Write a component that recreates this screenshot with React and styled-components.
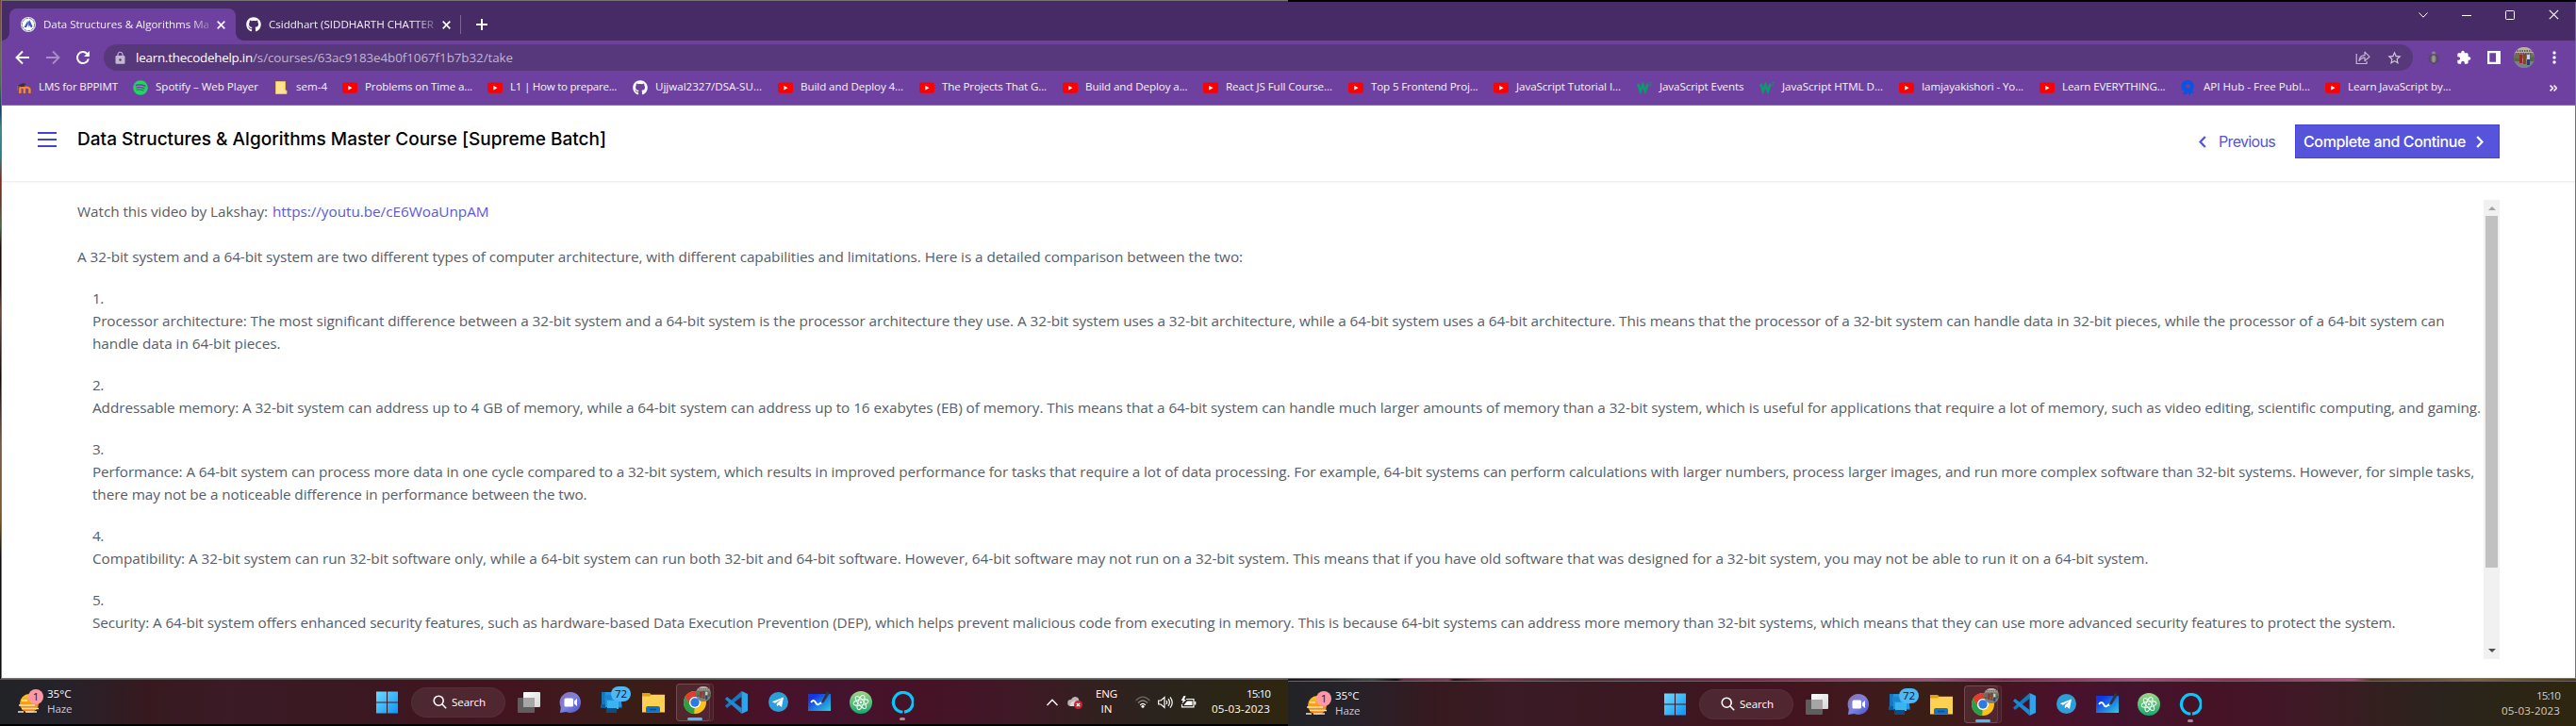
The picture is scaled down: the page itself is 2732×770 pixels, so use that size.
import React, { useLayoutEffect, useRef, useState } from "react";
import styled, { createGlobalStyle, css } from "styled-components";
import { FaGithub, FaSpotify } from "react-icons/fa";
import { MdExtension, MdLock, MdOutlineStarBorder } from "react-icons/md";

const Global = createGlobalStyle`
  * { box-sizing: border-box; }
  html, body { margin: 0; padding: 0; }
  body {
    width: 2732px;
    height: 770px;
    overflow: hidden;
    background: #000;
    font-family: "Open Sans", "Noto Sans", sans-serif;
  }
  svg { display: block; flex: none; }
`;

/* ---------- text set to a given measure ---------- */

const Measure = styled.span`
  display: block;
  flex: none;
  white-space: pre;
  width: ${(p) => p.$w}px;
`;

const Inner = styled.span`
  display: inline-block;
`;

function Fit({ w, children, ...rest }) {
  const ref = useRef(null);
  const [spacing, setSpacing] = useState(0);
  useLayoutEffect(() => {
    const natural = ref.current.getBoundingClientRect().width;
    setSpacing((w - natural) / Math.max(1, children.length));
  }, []);
  return (
    <Measure $w={w} {...rest}>
      <Inner ref={ref} style={{ letterSpacing: spacing }}>
        {children}
      </Inner>
    </Measure>
  );
}

/* ---------- desktop and window ---------- */

const Desktop = styled.div`
  position: relative;
  width: 2732px;
  height: 770px;
  display: flex;
  flex-direction: column;
  overflow: hidden;
  background: linear-gradient(#7a4a3c 0, #66704a 60px, #4b6b4a 90px, #123a66 118px, #3f8a86 136px, #2a7f8c 165px, #7c2c22 190px, #5b3a2c 215px, #4c6b4a 240px, #1b0808 262px, #1b0808 300px, #6a4a40 330px, #120606 400px, #7a5c50 470px, #7a5a28 550px, #0c0c10 590px, #0c0c10 770px);
`;

const SecondScreenEdge = styled.div`
  position: absolute;
  top: 0;
  right: 0;
  width: 1366px;
  height: 2px;
  background: #000;
`;

const Window = styled.div`
  margin-left: 1px;
  height: 720px;
  border: 1px solid #757575;
  display: flex;
  flex-direction: column;
  background: #fff;
`;

const TabStrip = styled.div`
  height: 42px;
  flex: none;
  padding: 8px 0 0 8px;
  background: #472b66;
  display: flex;
  align-items: flex-start;
`;

const Tab = styled.div`
  position: relative;
  height: 34px;
  width: ${(p) => p.$w}px;
  display: flex;
  align-items: center;
  padding-left: ${(p) => p.$pad}px;
  font-size: 11.6px;
  color: #f3eef8;
  ${(p) =>
    p.$active &&
    css`
      background: #6e41a0;
      border-radius: 8px 8px 0 0;
      &::before,
      &::after {
        content: "";
        position: absolute;
        bottom: 0;
        width: 8px;
        height: 8px;
      }
      &::before {
        left: -8px;
        background: radial-gradient(circle at 0 0, transparent 7.5px, #6e41a0 8px);
      }
      &::after {
        right: -8px;
        background: radial-gradient(circle at 100% 0, transparent 7.5px, #6e41a0 8px);
      }
    `}
`;

const TabTitle = styled.div`
  margin: 0 8px;
  width: 176px;
  overflow: hidden;
  line-height: 18px;
  padding-bottom: 1px;
  mask-image: linear-gradient(90deg, #000 155px, rgba(0, 0, 0, 0.25) 176px);
`;

const TabDivider = styled.div`
  width: 1px;
  height: 20px;
  margin: 7px 16px 0 0;
  background: #7d6695;
`;

const NewTab = styled.div`
  height: 34px;
  display: flex;
  align-items: center;
`;

const WindowButtons = styled.div`
  margin: 1px 17px 0 auto;
  display: flex;
  align-items: center;
  gap: 36px;
`;

const Toolbar = styled.div`
  flex: none;
  height: 69px;
  padding-top: 4px;
  background: #6e41a0;
  border-bottom: 1px solid #8e6ab4;
`;

const NavRow = styled.div`
  height: 28px;
  display: flex;
  align-items: center;
  padding-left: 14px;
`;

const NavIcons = styled.div`
  width: 94px;
  display: flex;
  gap: 16px;
`;

const UrlBar = styled.div`
  width: 2449px;
  height: 28px;
  border-radius: 14px;
  background: #57387b;
  display: flex;
  align-items: center;
  padding: 0 11px 0 10px;
  color: #c1b5ce;
  font-size: 13.4px;
`;

const UrlText = styled.div`
  display: flex;
  margin-left: 9px;
  line-height: 20px;
`;

const UrlHost = styled(Fit)`
  color: #fff;
`;

const UrlIcons = styled.div`
  margin-left: auto;
  display: flex;
  align-items: center;
  gap: 17px;
`;

const Extensions = styled.div`
  margin-left: 14px;
  display: flex;
  align-items: center;
`;

const Bookmarks = styled.div`
  height: 36px;
  display: flex;
  align-items: center;
  padding-left: 15px;
  font-size: 11.6px;
  line-height: 18px;
  color: #f6f2fa;
`;

const Bookmark = styled.div`
  flex: none;
  display: flex;
  align-items: center;
  gap: 8px;
  width: ${(p) => p.$advance}px;
`;

const BookmarkLabel = styled(Fit)`
  padding-bottom: 2px;
`;

/* ---------- course page ---------- */

const CourseHeader = styled.div`
  flex: none;
  height: 81px;
  display: flex;
  align-items: flex-start;
  padding: 20px 80px 0 38px;
  border-bottom: 1px solid #efefef;
  box-shadow: 0 1px 2px rgba(0, 0, 0, 0.04);
  font-family: Inter, "Liberation Sans", sans-serif;
`;

const MenuButton = styled.div`
  width: 20px;
  height: 16px;
  margin: 8px 22px 0 0;
  border-top: 2px solid #4441d6;
  border-bottom: 2px solid #4441d6;
  display: flex;
  align-items: center;
  &::after {
    content: "";
    width: 20px;
    height: 2px;
    background: #4441d6;
  }
`;

const CourseTitle = styled(Fit)`
  margin-top: 4px;
  font-size: 19px;
  font-weight: 550;
  line-height: 24px;
  color: #000;
`;

const HeaderActions = styled.div`
  margin-left: auto;
  display: flex;
  height: 36px;
`;

const PreviousLink = styled.div`
  display: flex;
  align-items: center;
  gap: 13px;
  margin-right: 21px;
  font-size: 16px;
  color: #5553da;
`;

const CompleteButton = styled.div`
  width: 217px;
  height: 36px;
  display: flex;
  align-items: center;
  padding-left: 8px;
  gap: 11px;
  background: #5654da;
  border: 1px solid #4643d0;
  color: #fff;
  font-size: 16px;
  font-weight: 550;
`;

const Lecture = styled.div`
  display: flex;
  height: 506px;
  padding: 19px 80px 0 80px;
  font-size: 15.3px;
  line-height: 24px;
  color: #565d68;
`;

const LectureText = styled.div`
  width: 2552px;
`;

const Intro = styled.div`
  display: flex;
  gap: 5px;
  margin-bottom: 24px;
`;

const Link = styled(Fit)`
  color: #5a58d8;
`;

const PointList = styled.div`
  padding: 20px 0 0 16px;
  display: flex;
  flex-direction: column;
  gap: 20px;
`;

const Scrollbar = styled.div`
  width: 17px;
  height: 487px;
  background: #f1f1f1;
  display: flex;
  flex-direction: column;
  align-items: center;
  padding: 7px 0;
`;

const Arrow = styled.div`
  width: 0;
  height: 0;
  border: 4px solid transparent;
  ${(p) =>
    p.$down
      ? css`border-top-color: #505050; border-bottom-width: 0; margin-top: auto;`
      : css`border-bottom-color: #a3a3a3; border-top-width: 0;`}
`;

const Thumb = styled.div`
  width: 13px;
  height: 373px;
  margin-top: 6px;
  background: #c1c1c1;
`;

/* ---------- taskbar ---------- */

const Taskbars = styled.div`
  display: flex;
  height: 50px;
`;

const Screen = styled.div`
  width: 1366px;
  height: 50px;
  display: flex;
  flex-direction: column;
  background: #000;
`;

const WallpaperSliver = styled.div`
  height: 2px;
  background: linear-gradient(90deg, #14161c 0, #20242a 40px, #3c4244 90px, #101214 115px, #6a2a48 122px, #7c3458 170px, #2a1018 176px, #8a2c4c 215px, #48303c 300px, #8a2050 500px, #b04a7c 680px, #8c1c50 760px, #bb4484 900px, #9c2858 1000px, #b84a80 1130px, #5c3820 1150px, #7a6434 1260px, #4a3c1c 1366px);
`;

const Taskbar = styled.div`
  height: 48px;
  border-top: 1px solid ${(p) => (p.$second ? "#6a6060" : "#5e5757")};
  display: flex;
  align-items: center;
  color: #fff;
  font-size: 11.6px;
  background: linear-gradient(90deg, #222326 0, #25222a 60px, #37191f 160px, #3a1b26 240px, #3b1721 400px, #43141f 530px, #3e1a1c 620px, #3a1e15 675px, #43151f 740px, #4a112a 820px, #43132e 880px, #471226 980px, #3f1926 1080px, #33201f 1160px, #2a241d 1230px, #2b2517 1290px, #2f260f 1366px);
`;

const Weather = styled.div`
  flex: none;
  display: flex;
  width: 399px;
  padding-left: 19px;
  gap: 4px;
  align-items: center;
  height: 47px;
`;

const Stack = styled.div`
  display: flex;
  flex-direction: column;
  align-items: ${(p) => p.$align || "flex-start"};
  line-height: 16px;
  padding-bottom: 2px;
  color: ${(p) => p.$color || "#fff"};
`;

const Muted = styled(Fit)`
  color: #cfc8cb;
`;

const SearchPill = styled.div`
  width: 100px;
  height: 32px;
  margin: 0 13px;
  padding-left: 22px;
  border-radius: 16px;
  background: rgba(255, 255, 255, 0.08);
  border: 1px solid rgba(255, 255, 255, 0.04);
  display: flex;
  align-items: center;
  gap: 5px;
`;

const Apps = styled.div`
  display: flex;
  align-items: center;
  gap: 20px;
  height: 47px;
`;

const AppSlot = styled.div`
  position: relative;
  width: 24px;
  height: 24px;
  display: flex;
  align-items: center;
  justify-content: center;
`;

const ActivePlate = styled.div`
  position: absolute;
  left: -8px;
  top: -8px;
  width: ${(p) => p.$w}px;
  height: 40px;
  border-radius: 4px;
  border: 1px solid rgba(255, 255, 255, 0.09);
  background: rgba(255, 255, 255, 0.04);
`;

const AppIcon = styled.div`
  position: relative;
`;

const Indicator = styled.div`
  position: absolute;
  top: 28px;
  left: ${(p) => 12 - p.$w / 2}px;
  width: ${(p) => p.$w}px;
  height: 3px;
  border-radius: 2px;
  background: ${(p) => p.$color};
`;

const CountBadge = styled.div`
  position: absolute;
  left: 11px;
  top: -5px;
  width: 21px;
  height: 16px;
  border-radius: 8px;
  background: #4cb8f8;
  color: #0c1620;
  font-size: 11.5px;
  line-height: 16px;
  text-align: center;
`;

const AvatarBadge = styled.div`
  position: absolute;
  left: 13px;
  top: -5px;
`;

const Tray = styled.div`
  display: flex;
  align-items: center;
  margin-left: auto;
`;

const Gap = styled.div`
  width: ${(p) => p.$w}px;
`;

/* ---------- drawings ---------- */

const CloseX = ({ s = 9, c = "#fff", w = 1.7 }) => (
  <svg width={s} height={s} viewBox="0 0 9 9" stroke={c} strokeWidth={w}>
    <path d="M.7 .7l7.6 7.6M8.3 .7L.7 8.3" />
  </svg>
);

const CourseIcon = () => (
  <svg width="16" height="16" viewBox="0 0 16 16">
    <circle cx="8" cy="8" r="8" fill="#dfe5ee" />
    <circle cx="8" cy="8" r="6.6" fill="#fff" stroke="#5d6670" strokeWidth=".8" strokeDasharray="3 1" />
    <path d="M3.5 11l2.8-5 1.2-2 .4 3.4L6 11zM8 5.5l1.3-2.2L12.6 10 11 11.5 9.5 9l-1 2z" fill="#3d57c4" />
  </svg>
);

const BackArrow = ({ color = "#fff", flip }) => (
  <svg width="16" height="16" viewBox="0 0 16 16" fill="none" stroke={color} strokeWidth="1.9">
    {flip ? <path d="M1 8h13M8 1.5L14.5 8 8 14.5" /> : <path d="M15 8H2M8 1.5L1.5 8 8 14.5" />}
  </svg>
);

const Reload = () => (
  <svg width="16" height="16" viewBox="0 0 16 16" fill="none" stroke="#fff" strokeWidth="2">
    <path d="M13.8 9.5A6 6 0 1 1 12.4 4" />
    <path d="M14.9 1v6H9z" fill="#fff" stroke="none" />
  </svg>
);

const Share = () => (
  <svg width="16" height="16" viewBox="0 0 16 16" fill="none" stroke="#c3b8cf" strokeWidth="1.2">
    <path d="M1.2 4v10.5H12V12" />
    <path d="M4 11.5c.3-4 2.5-5.700 6-5.800V2.200l5 5-5 4.300V8.200c-2.500 0-4.300.8-6 3.300z" strokeLinejoin="round" />
  </svg>
);

const Bug = () => (
  <svg width="16" height="16" viewBox="0 0 16 16">
    <path d="M2 5l3 2M14 5l-3 2M1 9h4M15 9h-4M2 13l3-2M14 13l-3-2" stroke="#564b5f" strokeWidth="1" />
    <ellipse cx="8" cy="9.5" rx="4" ry="5" fill="#6b6570" stroke="#4a4252" />
    <ellipse cx="8" cy="9.5" rx="1.8" ry="3.4" fill="#9a959c" />
    <ellipse cx="8" cy="3" rx="2.2" ry="1.6" fill="#8a858c" />
  </svg>
);

const SidePanel = () => (
  <svg width="14" height="14" viewBox="0 0 14 14">
    <path fill="#fff" fillRule="evenodd" d="M0 0h14v14H0zM2.3 2.3v9.4H9V2.3z" />
  </svg>
);

const Avatar = ({ s = 22 }) => (
  <svg width={s} height={s} viewBox="0 0 22 22">
    <defs>
      <clipPath id="face"><circle cx="11" cy="11" r="11" /></clipPath>
    </defs>
    <g clipPath="url(#face)">
      <rect width="22" height="22" fill="#8f8a83" />
      <rect width="22" height="6" fill="#b9b3a8" />
      <path d="M1 4h20M2 7h18" stroke="#4c463f" strokeWidth="1.5" strokeDasharray="1.5 1" />
      <path d="M0 8h22v4H0z" fill="#6c6b5c" />
      <path d="M0 12h6v3H0zM17 11h5v4h-5z" fill="#4d6b42" />
      <path d="M0 15h22v7H0z" fill="#78818a" />
      <path d="M6 8h3v9H6z" fill="#9a2a2a" />
      <path d="M10 7h3v11h-3z" fill="#7a4a2c" />
      <path d="M14 8h3v5h-3z" fill="#c8d4e4" />
      <path d="M14 13h3v6h-3z" fill="#28406c" />
    </g>
  </svg>
);

const Dots = () => (
  <svg width="4" height="14" viewBox="0 0 4 14" fill="#fff">
    <circle cx="2" cy="2" r="1.7" /><circle cx="2" cy="7" r="1.7" /><circle cx="2" cy="12" r="1.7" />
  </svg>
);

const YouTube = () => (
  <svg width="16" height="16" viewBox="0 0 16 16">
    <rect y="2.5" width="16" height="11.3" rx="2.4" fill="#f00" />
    <path d="M6.3 5.8l4.2 2.4-4.2 2.4z" fill="#fff" />
  </svg>
);

const Moodle = () => (
  <svg width="16" height="16" viewBox="0 0 16 16" fill="none">
    <path d="M4.300 14V9.5Q4.300 7.6 6.300 7.600T8.900 9.500V14M8.900 9.500Q8.900 7.600 11.200 7.600T14.400 9.500V14" stroke="#f28a2e" strokeWidth="2.4" />
    <path d="M2 5.500l5-2.200 3.500.5-2 3-3 .5z" fill="#3b3038" />
    <path d="M1.5 6v5" stroke="#8a6a78" strokeWidth=".8" />
  </svg>
);

const Note = () => (
  <svg width="16" height="16" viewBox="0 0 16 16">
    <path d="M2.500 1.500h10v9.500h1.500v3.500H2.500z" fill="#fde293" stroke="#e5c155" strokeWidth=".9" />
  </svg>
);

const W3 = () => (
  <svg width="16" height="16" viewBox="0 0 16 16" fill="none" stroke="#0a9b6c">
    <path d="M1.300 4l2.500 7.600L6.400 5 9 11.600 11.500 4" strokeWidth="2.700" />
    <path d="M13.3 2.3h1.8l-1 1.5q1.2.2.9 1.400-.6 1-1.800.4" strokeWidth=".7" />
  </svg>
);

const ApiHub = () => (
  <svg width="16" height="16" viewBox="0 0 16 16">
    <path d="M7.5 0a6.5 6.5 0 0 1 4.5 11l2.5 2.5H11L9.5 15.8H8V13L5 15.5 1.500 15l2-3A6.500 6.500 0 0 1 7.500 0z" fill="#0a55e0" />
    <circle cx="7.5" cy="6.5" r="2.3" fill="#6e41a0" />
    <path d="M6 9.5L5.500 13 8 11l2 1-1-3z" fill="#0a55e0" />
  </svg>
);

const Chevron = ({ right, color }) => (
  <svg width="8" height="13" viewBox="0 0 8 13" fill="none" stroke={color} strokeWidth="2.300">
    {right ? <path d="M1.200 1l5.300 5.500L1.200 12" /> : <path d="M6.800 1L1.500 6.500 6.800 12" />}
  </svg>
);

const Haze = () => (
  <svg width="27" height="28" viewBox="0 0 27 28">
    <defs>
      <linearGradient id="sun" x1="0" y1="0" x2="0" y2="1">
        <stop offset="0" stopColor="#ffc814" /><stop offset="1" stopColor="#ef7416" />
      </linearGradient>
    </defs>
    <circle cx="12" cy="15" r="10" fill="url(#sun)" />
    <path d="M4 12h6M1 17h17M4 20.5h18M0 24h6M8 24h12" stroke="#ffe9b8" strokeWidth="1.6" />
    <circle cx="19" cy="8" r="8" fill="#ff97a5" />
    <text x="19" y="12.2" fontSize="11.5" textAnchor="middle" fill="#241416" fontFamily="Open Sans">1</text>
  </svg>
);

const WindowsLogo = () => (
  <svg width="24" height="24" viewBox="0 0 24 24">
    <defs>
      <linearGradient id="win" x1="0" y1="0" x2="24" y2="24" gradientUnits="userSpaceOnUse">
        <stop offset="0" stopColor="#6fdcff" /><stop offset="1" stopColor="#0a90f4" />
      </linearGradient>
    </defs>
    <path d="M0 .5h11v11H0zM12 .5h11v11H12zM0 12.5h11v11H0zM12 12.5h11v11H12z" fill="url(#win)" />
  </svg>
);

const Magnifier = () => (
  <svg width="15" height="15" viewBox="0 0 15 15" fill="none" stroke="#fff" strokeWidth="1.6">
    <circle cx="6.2" cy="6.2" r="5" /><path d="M9.8 9.8l4.4 4.5" />
  </svg>
);

const TaskView = () => (
  <svg width="24" height="22" viewBox="0 0 24 22">
    <defs>
      <linearGradient id="tv" x1="0" y1="0" x2="1" y2="1"><stop offset="0" stopColor="#fff" /><stop offset="1" stopColor="#d5d5d5" /></linearGradient>
    </defs>
    <rect x="6" width="18" height="16" rx="1" fill="url(#tv)" />
    <rect y="6" width="18" height="16" rx="1" fill="#5f5d5e" />
    <rect x="6" y="6" width="12" height="10" fill="#a8a5a6" />
  </svg>
);

const Chat = () => (
  <svg width="24" height="24" viewBox="0 0 24 24">
    <defs>
      <linearGradient id="ch" x1="0" y1="0" x2="1" y2="1"><stop offset="0" stopColor="#8e6fae" /><stop offset=".5" stopColor="#7b82e0" /><stop offset="1" stopColor="#4a50c4" /></linearGradient>
    </defs>
    <path d="M12 1a11 11 0 1 1-4.500 21L1 23l.8-6A11 11 0 0 1 12 1z" fill="url(#ch)" />
    <rect x="5.5" y="7.5" width="9.5" height="9" rx="1.5" fill="#fff" />
    <path d="M16 10.500l3-2.500v8l-3-2.500z" fill="#fff" />
  </svg>
);

const PhoneLink = () => (
  <svg width="24" height="24" viewBox="0 0 24 24">
    <path d="M1 1h10v16H1z" fill="#1577c0" /><path d="M0 14h6v4H0zM18 14h5v4h-5z" fill="#0d5c9c" />
    <rect x="5" y="1" width="17" height="16" fill="#2296dc" /><rect x="7" y="10" width="12" height="9" fill="#39b4ee" />
    <path d="M6 18h11v5H6z" fill="#0b4c84" /><path d="M4 4h8v5H4z" fill="#1c86d0" />
  </svg>
);

const Folder = () => (
  <svg width="24" height="22" viewBox="0 0 24 22">
    <path d="M0 1h8l2 2v3H0z" fill="#e2a20c" />
    <path d="M0 4.5h8l2-1.800h14V21.500H0z" fill="#ffd153" />
    <path d="M4 21.500V17q0-2 2-2h11q2 0 2 2v4.500z" fill="#1272c4" />
    <path d="M8 18.500h7" stroke="#0b4e90" strokeWidth="1.5" />
  </svg>
);

const Chrome = () => (
  <svg width="24" height="24" viewBox="0 0 24 24">
    <circle cx="12" cy="12" r="12" fill="#fbc116" />
    <path d="M1.6 6A12 12 0 0 1 22.4 6H12a6 6 0 0 0-5.2 9z" fill="#e33b2e" />
    <path d="M1.6 6l5.2 9A6 6 0 0 0 12 18l-.5 6A12 12 0 0 1 1.6 6z" fill="#26a148" />
    <path d="M17.2 15L12 24h-.5L11.5 17z" fill="#fbc116" />
    <circle cx="12" cy="12" r="6" fill="#fff" /><circle cx="12" cy="12" r="4.7" fill="#2c7be5" />
  </svg>
);

const VSCode = () => (
  <svg width="24" height="24" viewBox="0 0 24 24">
    <path d="M17.5 0L0 15.5 2 18 17.5 6z" fill="#1279bf" />
    <path d="M17.5 24L0 8.5 2 6 17.5 18z" fill="#1b8ad3" />
    <path d="M17.5 0L24 3v18l-6.500 3z" fill="#2ba6ee" />
  </svg>
);

const Telegram = () => (
  <svg width="21" height="21" viewBox="0 0 21 21">
    <circle cx="10.5" cy="10.5" r="10.5" fill="#2a9fd9" />
    <path d="M3.800 10.300L16 5.500l-2 10.500-3.300-2.400-1.700 1.700-.3-3L14 7.500l-7 4.300z" fill="#fff" />
  </svg>
);

const Whiteboard = () => (
  <svg width="24" height="24" viewBox="0 0 24 24">
    <defs>
      <linearGradient id="wb" x1="0" y1="0" x2="1" y2="1"><stop offset="0.2" stopColor="#1136e8" /><stop offset="1" stopColor="#2cd0dc" /></linearGradient>
    </defs>
    <rect y="3" width="24" height="18" fill="url(#wb)" />
    <path d="M3 12q3-4 5 0t4.500 1l2.500-1" fill="none" stroke="#fff" strokeWidth="1.9" />
    <path d="M14 12L20 0l3 2-6.500 10-2.500 1z" fill="#33323c" />
  </svg>
);

const Atom = () => (
  <svg width="24" height="24" viewBox="0 0 24 24">
    <defs>
      <linearGradient id="at" x1="0" y1="0" x2="0" y2="1"><stop offset="0" stopColor="#9ed789" /><stop offset="1" stopColor="#18a76e" /></linearGradient>
    </defs>
    <circle cx="12" cy="12" r="12" fill="url(#at)" />
    <g fill="none" stroke="#e8f8ec" strokeWidth="1">
      <ellipse cx="12" cy="12" rx="3" ry="8" transform="rotate(20 12 12)" />
      <ellipse cx="12" cy="12" rx="3" ry="8" transform="rotate(80 12 12)" />
      <ellipse cx="12" cy="12" rx="3" ry="8" transform="rotate(140 12 12)" />
    </g>
    <circle cx="12" cy="12" r="1.2" fill="#fff" />
  </svg>
);

const Alexa = () => (
  <svg width="24" height="24" viewBox="0 0 24 24" fill="none" stroke="#06c8fb" strokeWidth="3.2">
    <path d="M10.5 22A10.4 10.4 0 1 1 14 22.2M10.8 23.5V20.5" />
  </svg>
);

const TrayUp = () => (
  <svg width="12" height="8" viewBox="0 0 12 8" fill="none" stroke="#fff" strokeWidth="1.4"><path d="M.5 7L6 1.3 11.500 7" /></svg>
);

const CloudError = () => (
  <svg width="16" height="14" viewBox="0 0 16 14">
    <path d="M3.5 11a3.5 3.5 0 0 1 .5-7A4.5 4.5 0 0 1 12 3l1 8z" fill="#b9b4b5" />
    <path d="M3 11q0-5 5-6l4 6z" fill="#dedada" />
    <circle cx="11.5" cy="9.5" r="4.5" fill="#d81f33" />
    <path d="M9.8 7.8l3.4 3.4M13.2 7.8l-3.4 3.4" stroke="#fff" strokeWidth="1.2" />
  </svg>
);

const Wifi = () => (
  <svg width="16" height="13" viewBox="0 0 16 13" fill="none" strokeWidth="1.3">
    <path d="M.6 5Q8-2.6 15.4 5" stroke="#6b6462" />
    <path d="M3 7.5q5-5 10 0" stroke="#8c8684" />
    <path d="M5.2 9.7q2.8-2.8 5.6 0" stroke="#fff" />
    <circle cx="8" cy="11.3" r="1.5" fill="#fff" />
  </svg>
);

const Volume = () => (
  <svg width="16" height="14" viewBox="0 0 16 14" fill="none" stroke="#fff" strokeWidth="1.2">
    <path d="M.7 5v4h2.500L7 12.500v-11L3.200 5z" /><path d="M9 5q1.300 2 0 4M11 3.200q2.800 3.800 0 7.600M13 1.300q4.500 5.700 0 11.400" />
  </svg>
);

const Battery = () => (
  <svg width="17" height="14" viewBox="0 0 17 14" fill="none" stroke="#fff" strokeWidth="1.2">
    <path d="M6 3.5h8v8.300H1.500V9" /><path d="M7 5.500h5.500V10H3.500z" fill="#fff" stroke="none" /><path d="M15.5 6v3.500" strokeWidth="1.6" />
    <path d="M3.5 0L.7 5h2L1.500 8.500 6 4H4L5.500 0z" fill="#fff" stroke="none" />
  </svg>
);

/* ---------- data ---------- */

const bookmarks = [
  [Moodle, "LMS for BPPIMT", 84, 124],
  [() => <FaSpotify size={16} color="#1ed760" />, "Spotify – Web Player", 109, 149],
  [Note, "sem-4", 33, 73],
  [YouTube, "Problems on Time a...", 114, 154],
  [YouTube, "L1 | How to prepare...", 113, 154],
  [() => <FaGithub size={16} color="#fff" />, "Ujjwal2327/DSA-SU...", 113, 154],
  [YouTube, "Build and Deploy 4...", 109, 150],
  [YouTube, "The Projects That G...", 111, 152],
  [YouTube, "Build and Deploy a...", 108.5, 149],
  [YouTube, "React JS Full Course...", 113, 154],
  [YouTube, "Top 5 Frontend Proj...", 113.5, 154],
  [YouTube, "JavaScript Tutorial I...", 111, 152],
  [W3, "JavaScript Events", 89.5, 130],
  [W3, "JavaScript HTML D...", 107, 148],
  [YouTube, "Iamjayakishori - Yo...", 108, 149],
  [YouTube, "Learn EVERYTHING...", 109.5, 150],
  [ApiHub, "API Hub - Free Publ...", 113, 153],
  [YouTube, "Learn JavaScript by...", 109.5, 150],
];

const points = [
  [
    ["Processor architecture: The most significant difference between a 32-bit system and a 64-bit system is the processor architecture they use. A 32-bit system uses a 32-bit architecture, while a 64-bit system uses a 64-bit architecture. This means that the processor of a 32-bit system can handle data in 32-bit pieces, while the processor of a 64-bit system can", 2494.5],
    ["handle data in 64-bit pieces.", 199.5],
  ],
  [["Addressable memory: A 32-bit system can address up to 4 GB of memory, while a 64-bit system can address up to 16 exabytes (EB) of memory. This means that a 64-bit system can handle much larger amounts of memory than a 32-bit system, which is useful for applications that require a lot of memory, such as video editing, scientific computing, and gaming.", 2533]],
  [
    ["Performance: A 64-bit system can process more data in one cycle compared to a 32-bit system, which results in improved performance for tasks that require a lot of data processing. For example, 64-bit systems can perform calculations with larger numbers, process larger images, and run more complex software than 32-bit systems. However, for simple tasks,", 2526],
    ["there may not be a noticeable difference in performance between the two.", 524.5],
  ],
  [["Compatibility: A 32-bit system can run 32-bit software only, while a 64-bit system can run both 32-bit and 64-bit software. However, 64-bit software may not run on a 32-bit system. This means that if you have old software that was designed for a 32-bit system, you may not be able to run it on a 64-bit system.", 2180.5]],
  [["Security: A 64-bit system offers enhanced security features, such as hardware-based Data Execution Prevention (DEP), which helps prevent malicious code from executing in memory. This is because 64-bit systems can address more memory than 32-bit systems, which means that they can use more advanced security features to protect the system.", 2442.5]],
];

function TaskbarContents({ second }) {
  return (
    <Taskbar $second={second}>
      <Weather>
        <Haze />
        <Stack>
          <Fit w={25.5}>35°C</Fit>
          <Muted w={26.5}>Haze</Muted>
        </Stack>
      </Weather>
      <WindowsLogo />
      <SearchPill>
        <Magnifier />
        <Fit w={36}>Search</Fit>
      </SearchPill>
      <Apps>
        <AppSlot><TaskView /></AppSlot>
        <AppSlot><Chat /></AppSlot>
        <AppSlot><PhoneLink /><CountBadge>72</CountBadge></AppSlot>
        <AppSlot><Folder /></AppSlot>
        <AppSlot>
          <ActivePlate $w={40} />
          <ActivePlate $w={36} />
          <AppIcon><Chrome /></AppIcon>
          <AvatarBadge><Avatar s={16} /></AvatarBadge>
          <Indicator $w={16} $color="#4cb8f8" />
        </AppSlot>
        <AppSlot><VSCode /></AppSlot>
        <AppSlot><Telegram /></AppSlot>
        <AppSlot><Whiteboard /></AppSlot>
        <AppSlot><Atom /></AppSlot>
        <AppSlot><Alexa /><Indicator $w={6} $color="#a08d97" /></AppSlot>
      </Apps>
      <Tray>
        {!second && (
          <>
            <TrayUp />
            <Gap $w={10} />
            <CloudError />
            <Gap $w={14} />
            <Stack $align="center">
              <Fit w={23}>ENG</Fit>
              <Fit w={12}>IN</Fit>
            </Stack>
            <Gap $w={19} />
            <Wifi />
            <Gap $w={8} />
            <Volume />
            <Gap $w={8} />
            <Battery />
            <Gap $w={16} />
          </>
        )}
        <Stack $align="flex-end" $color={second ? "#d3cec4" : "#fff"}>
          <Fit w={25}>15:10</Fit>
          <Fit w={62}>05-03-2023</Fit>
        </Stack>
        <Gap $w={second ? 17 : 19} />
      </Tray>
    </Taskbar>
  );
}

export default function App() {
  return (
    <Desktop>
      <Global />
      <Window>
        <TabStrip>
          <Tab $active $w={240} $pad={12}>
            <CourseIcon />
            <TabTitle><Fit w={176}>Data Structures & Algorithms Ma</Fit></TabTitle>
            <CloseX />
          </Tab>
          <Tab $w={238} $pad={11}>
            <FaGithub size={16} color="#fff" />
            <TabTitle><Fit w={175}>Csiddhart (SIDDHARTH CHATTER</Fit></TabTitle>
            <CloseX />
          </Tab>
          <TabDivider />
          <NewTab>
            <svg width="12" height="12" viewBox="0 0 12 12" stroke="#fff" strokeWidth="2"><path d="M6 0v12M0 6h12" /></svg>
          </NewTab>
          <WindowButtons>
            <svg width="10" height="6" viewBox="0 0 10 6" fill="none" stroke="#fff"><path d="M.5 .5L5 5.2 9.500 .5" /></svg>
            <svg width="10" height="10" viewBox="0 0 10 10" stroke="#fff"><path d="M0 5.5h10" /></svg>
            <svg width="10" height="10" viewBox="0 0 10 10" fill="none" stroke="#fff"><rect x=".5" y=".5" width="9" height="9" rx="1" /></svg>
            <CloseX s={11} w={1} />
          </WindowButtons>
        </TabStrip>
        <Toolbar>
          <NavRow>
            <NavIcons>
              <BackArrow />
              <BackArrow flip color="#a88dc6" />
              <Reload />
            </NavIcons>
            <UrlBar>
              <MdLock size={15} color="#c3b8cf" />
              <UrlText>
                <UrlHost w={124}>learn.thecodehelp.in</UrlHost>
                <Fit w={276}>/s/courses/63ac9183e4b0f1067f1b7b32/take</Fit>
              </UrlText>
              <UrlIcons>
                <Share />
                <MdOutlineStarBorder size={17} color="#d3cadd" />
              </UrlIcons>
            </UrlBar>
            <Extensions>
              <Bug />
              <Gap $w={16} />
              <MdExtension size={16} color="#fff" />
              <Gap $w={17} />
              <SidePanel />
              <Gap $w={14} />
              <Avatar />
              <Gap $w={19} />
              <Dots />
            </Extensions>
          </NavRow>
          <Bookmarks>
            {bookmarks.map(([Icon, label, w, advance], i) => (
              <Bookmark key={i} $advance={advance}>
                <Icon />
                <BookmarkLabel w={w}>{label}</BookmarkLabel>
              </Bookmark>
            ))}
            <Gap $w={88} />
            <svg width="8" height="7" viewBox="0 0 8 7" fill="none" stroke="#fff" strokeWidth="1.5"><path d="M.6 .6L3.5 3.5 .6 6.4M4.6 .6L7.4 3.500 4.600 6.400" /></svg>
          </Bookmarks>
        </Toolbar>
        <CourseHeader>
          <MenuButton />
          <CourseTitle w={561}>Data Structures & Algorithms Master Course [Supreme Batch]</CourseTitle>
          <HeaderActions>
            <PreviousLink>
              <Chevron color="#5553da" />
              <Fit w={60}>Previous</Fit>
            </PreviousLink>
            <CompleteButton>
              <Fit w={172}>Complete and Continue</Fit>
              <Chevron right color="#fff" />
            </CompleteButton>
          </HeaderActions>
        </CourseHeader>
        <Lecture>
          <LectureText>
            <Intro>
              <Fit w={202}>Watch this video by Lakshay:</Fit>
              <Link w={229.5}>https://youtu.be/cE6WoaUnpAM</Link>
            </Intro>
            <Fit w={1236}>A 32-bit system and a 64-bit system are two different types of computer architecture, with different capabilities and limitations. Here is a detailed comparison between the two:</Fit>
            <PointList>
              {points.map((lines, i) => (
                <div key={i}>
                  <Fit w={12}>{`${i + 1}.`}</Fit>
                  {lines.map(([text, w]) => (
                    <Fit key={text} w={w}>{text}</Fit>
                  ))}
                </div>
              ))}
            </PointList>
          </LectureText>
          <Scrollbar>
            <Arrow />
            <Thumb />
            <Arrow $down />
          </Scrollbar>
        </Lecture>
      </Window>
      <Taskbars>
        <Screen>
          <TaskbarContents />
        </Screen>
        <Screen>
          <WallpaperSliver />
          <TaskbarContents second />
        </Screen>
      </Taskbars>
      <SecondScreenEdge />
    </Desktop>
  );
}
